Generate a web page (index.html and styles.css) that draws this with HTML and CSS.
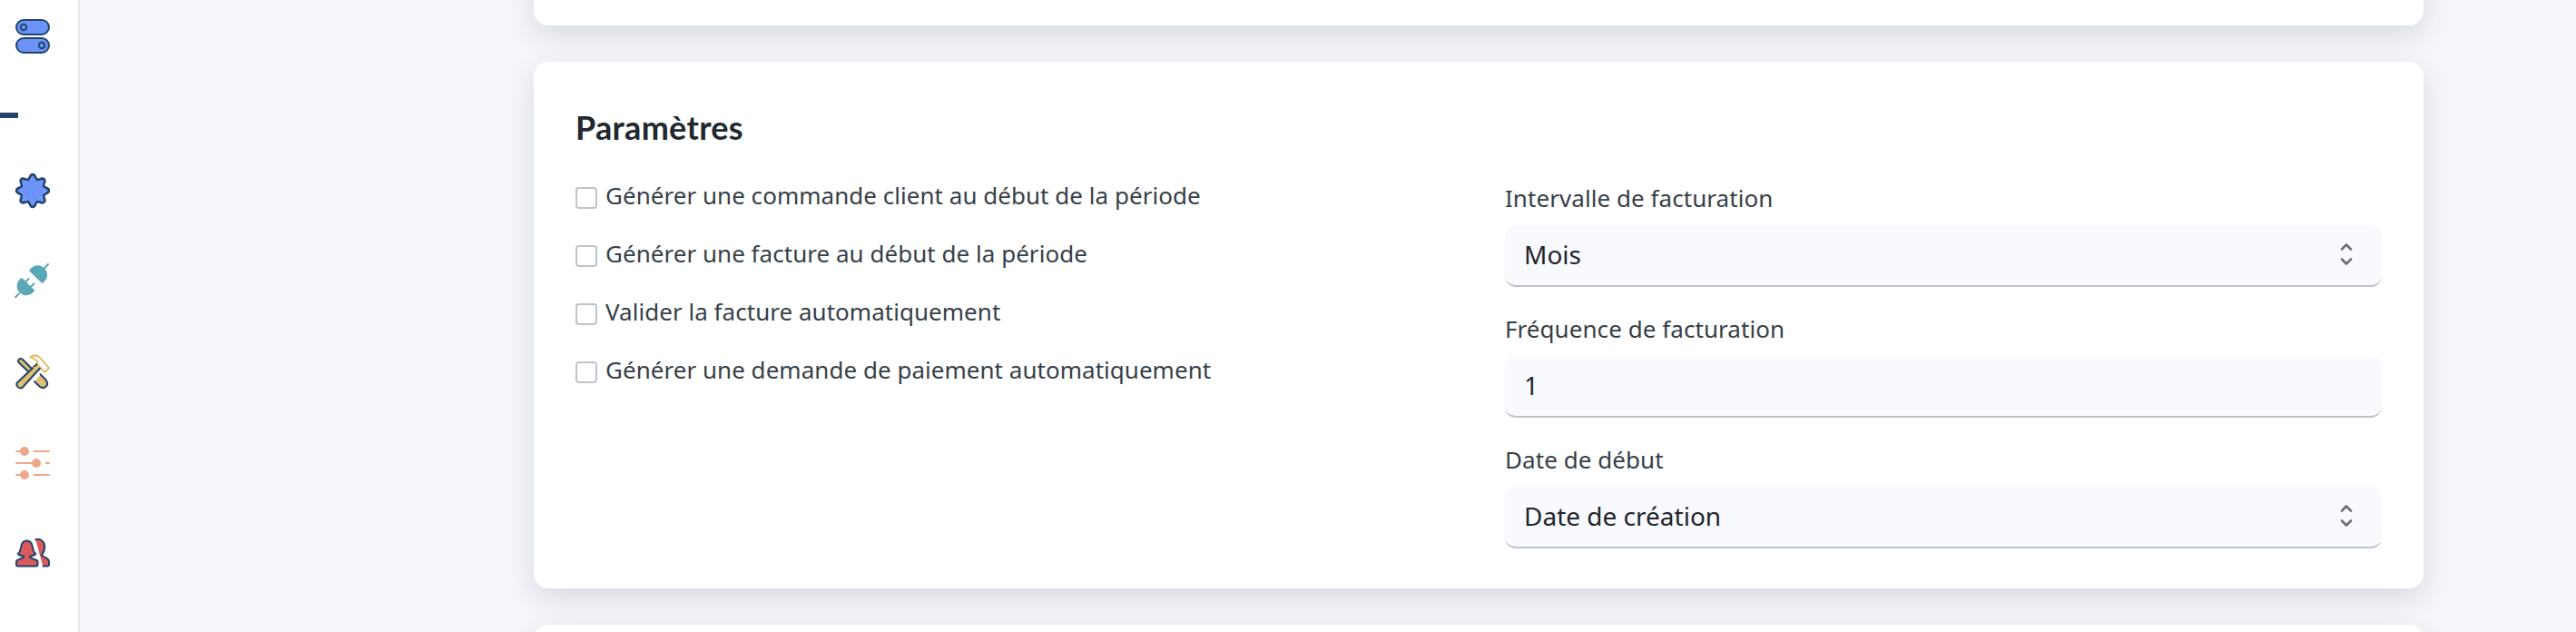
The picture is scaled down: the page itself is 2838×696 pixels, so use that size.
FILE: index.html
```
<!DOCTYPE html>
<html lang="fr">
<head>
<meta charset="utf-8">
<title>Paramètres</title>
<link rel="stylesheet" href="styles.css">
</head>
<body>
<div class="app">
  <nav class="sidebar">
    <svg class="ico ico-toggles" viewBox="16 20 40 40" fill="#6b93f8" stroke="#24446c" stroke-width="2">
      <rect x="18" y="22" width="36" height="16" rx="8"/><circle cx="26" cy="30" r="3.2"/>
      <rect x="18" y="42" width="36" height="16" rx="8"/><circle cx="46" cy="50" r="3.2"/>
    </svg>
    <span class="active-bar"></span>
    <svg class="ico ico-gear" viewBox="-20 -20 40 40" fill="#6b93f8" stroke="#24446c" stroke-width="2.6" stroke-linecap="round">
      <defs><path id="lobe" d="M-5.05-12.2C-2.65-13.2-3.6-17.9 0-17.9S2.65-13.2 5.05-12.2"/></defs>
      <circle r="12.4" stroke="none"/>
      <use href="#lobe"/><use href="#lobe" transform="rotate(45)"/><use href="#lobe" transform="rotate(90)"/><use href="#lobe" transform="rotate(135)"/><use href="#lobe" transform="rotate(180)"/><use href="#lobe" transform="rotate(225)"/><use href="#lobe" transform="rotate(270)"/><use href="#lobe" transform="rotate(315)"/>
    </svg>
    <svg class="ico ico-plug" viewBox="16 289 40 40" fill="#5ba8b5" stroke="#5ba8b5" stroke-width="2" stroke-linecap="round" stroke-linejoin="round">
      <path stroke="none" d="M32.1 298.3A10.4 10.4 0 1 1 46.3 311.9Z"/>
      <path stroke="none" d="M24 305.7A10.4 10.4 0 1 0 38.2 319.7Z"/>
      <path fill="none" d="M49 295.2 53 291M21 323.2 17.2 327.2M27.5 311 31.6 307M33.3 316.5 37.4 312.5"/>
    </svg>
    <svg class="ico ico-tools" viewBox="16 390 40 40" fill="#e0c070" stroke="#24446c" stroke-width="2" stroke-linecap="round" stroke-linejoin="round">
      <path stroke="none" d="M38.5 419.5 45 412.5 51 418.5C55.500 424 49 429.500 44.500 426Z"/>
      <path fill="none" d="M44.500 412.300 50.500 418.300C55 424.500 48.500 429.500 43.500 425.500L38 420.300"/>
      <path d="M31.500 409.500 21 399.500C18.500 396.500 22 393.500 25 396L34.500 405.500"/>
      <path fill="none" stroke="#e0c070" d="M33.300 393.300C37.500 390.500 41.500 391 44.500 394.300L54 405.300 49.600 409.800 44.500 405 40.500 400.500 41.500 398.500C39.500 395.500 37 394.500 33.300 393.300Z"/>
      <path d="M38.500 403 18.800 421.500C17 425 21 428.500 24.500 427L43.500 406"/>
      <path stroke="none" d="M36.500 405 39.500 401.500 44.500 405 41.500 408.500Z"/>
      <path fill="none" d="M38.500 403 40.300 401.300M42 407.500 43.800 405.700"/>
    </svg>
    <svg class="ico ico-sliders" viewBox="16 490 40 40" fill="#eba98a" stroke="#eba98a" stroke-width="2" stroke-linecap="round">
      <path d="M18 497H27M37.500 497H54M18 510H40M50.500 510H54M18 523H27M37.500 523H54"/>
      <g stroke="none"><circle cx="27" cy="497" r="5"/><circle cx="40" cy="510" r="5"/><circle cx="27" cy="523" r="5"/></g>
    </svg>
    <svg class="ico ico-users" viewBox="16 589 40 40" fill="#d95b5b" stroke="#24446c" stroke-width="2" stroke-linecap="round" stroke-linejoin="round">
      <path stroke="none" d="M39.300 594.500C44.500 592.500 49 596 49.200 602 49.300 607 48 608.500 45.800 611.300 47.500 614 54 614 54 618.500V623.400H47.200Z"/>
      <path fill="none" d="M39.300 594.300C44.500 592.500 49 596 49.200 602 49.300 607 48 608.500 45.800 611.300 47.500 614 54 614 54 618.500V621.500Q54 623.400 52 623.400H47.500"/>
      <path d="M20 623.500Q18 623.500 18 621.500V618.500C18 615.500 26.500 615.500 26.300 612.700 24.500 612.300 21.500 612 19.700 610 24.500 606 22 602 24.500 598.200 27 594.500 32 594.500 34.500 598.200 37 602 34.500 606 39.300 610 37.500 612 34.500 612.300 32.700 612.700 32.500 615.500 41.500 615.500 41.500 618.500V621.500Q41.500 623.500 39.500 623.500Z"/>
    </svg>
  </nav>
  <main class="content">
    <section class="card card-prev"></section>
    <section class="card card-main">
      <div class="col">
        <h2 class="title">Paramètres</h2>
        <div class="checks">
          <label class="check"><input type="checkbox" class="box"><span>Générer une commande client au début de la période</span></label>
          <label class="check"><input type="checkbox" class="box"><span>Générer une facture au début de la période</span></label>
          <label class="check"><input type="checkbox" class="box"><span>Valider la facture automatiquement</span></label>
          <label class="check"><input type="checkbox" class="box"><span>Générer une demande de paiement automatiquement</span></label>
        </div>
      </div>
      <div class="col fields">
        <div class="field"><span class="label">Intervalle de facturation</span>
          <div class="control"><span>Mois</span><svg class="chev" viewBox="0 0 14 26"><path d="M2 7.500 7 2.500 12 7.500M2 18.500 7 23.500 12 18.500"/></svg></div></div>
        <div class="field"><span class="label">Fréquence de facturation</span>
          <div class="control"><span>1</span></div></div>
        <div class="field"><span class="label">Date de début</span>
          <div class="control"><span>Date de création</span><svg class="chev" viewBox="0 0 14 26"><path d="M2 7.500 7 2.500 12 7.500M2 18.500 7 23.500 12 18.500"/></svg></div></div>
      </div>
    </section>
    <section class="card card-next"></section>
  </main>
</div>
</body>
</html>
```
FILE: styles.css
```
* { box-sizing: border-box; }
body {
  margin: 0;
  background: #f5f6fa;
  color: #363f48;
  font: 26px/36px "Noto Sans", "Open Sans", sans-serif;
}
.app { display: flex; height: 696px; overflow: hidden; }

/* Sidebar */
.sidebar {
  flex: none;
  width: 88px;
  background: #fff;
  border-right: 2px solid #e6e8ee;
  display: flex;
  flex-direction: column;
  align-items: flex-start;
  padding-top: 20px;
}
.ico { width: 40px; height: 40px; margin-left: 16px; flex: none; }
.active-bar { width: 20px; height: 6px; margin: 64px 0 60px; background: #24446c; }
.ico-plug { margin-top: 59px; }
.ico-tools { margin-top: 61px; }
.ico-sliders { margin-top: 60px; }
.ico-users { margin-top: 59px; }

/* Cards */
.content {
  flex: 1;
  display: flex;
  flex-direction: column;
  gap: 40px;
  padding: 0 168px 0 500px;
}
.card {
  flex: none;
  background: #fff;
  border-radius: 16px;
  box-shadow: 0 10px 30px rgba(33, 56, 62, .14);
}
.card-prev { height: 228px; margin-top: -200px; }
.card-next { height: 200px; }
.card-main {
  height: 580px;
  padding: 46px;
  display: grid;
  grid-template-columns: 966px 966px;
  justify-content: space-between;
}
.title {
  margin: 0;
  padding-top: 4px;
  font: 700 36px/44px Lato, "Noto Sans", sans-serif;
  letter-spacing: .3px;
  color: #22282f;
}
.checks { display: flex; flex-direction: column; gap: 28px; margin-top: 35px; }
.check { display: flex; gap: 9px; height: 36px; align-items: flex-start; letter-spacing: .03px; }
.box {
  appearance: none;
  flex: none;
  width: 24px;
  height: 24px;
  margin: 9px 0 0;
  border: 2px solid #bfc4ca;
  border-radius: 4px;
  background: #fff;
}

/* Form fields */
.fields { padding-top: 86px; display: flex; flex-direction: column; gap: 28px; }
.field { display: flex; flex-direction: column; gap: 12px; height: 116px; }
.label { height: 36px; letter-spacing: .06px; }
.control {
  height: 68px;
  display: flex;
  align-items: center;
  justify-content: space-between;
  padding: 0 32px 2px 21px;
  background: #f9faff;
  border-bottom: 2px solid #bfc4ca;
  border-radius: 12px;
  font-size: 28px;
  color: #212529;
}
.chev {
  width: 14px;
  height: 26px;
  fill: none;
  stroke: #6a7075;
  stroke-width: 2.6;
  stroke-linecap: round;
  stroke-linejoin: round;
}
```
